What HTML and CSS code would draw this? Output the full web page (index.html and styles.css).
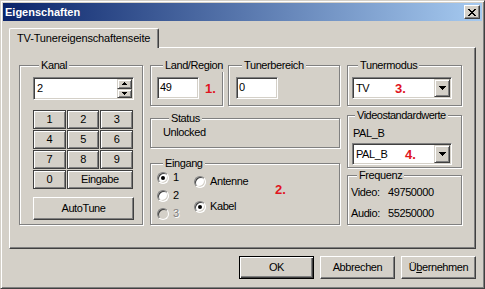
FILE: index.html
```html
<!DOCTYPE html>
<html lang="de">

<head>
   <meta charset="UTF-8">
   <title>Eigenschaften</title>
   <link rel="stylesheet" href="styles.css">
</head>

<body>
   <div class="window">
      <div class="titlebar">
         <span class="title">Eigenschaften</span>
         <span class="close-btn">
            <svg width="8" height="7" viewBox="0 0 8 7">
               <path d="M0 0h2v1h-2z M6 0h2v1h-2z M1 1h2v1h-2z M5 1h2v1h-2z M2 2h4v1h-4z M3 3h2v1h-2z M2 4h4v1h-4z M1 5h2v1h-2z M5 5h2v1h-2z M0 6h2v1h-2z M6 6h2v1h-2z" fill="#000" />
            </svg>
         </span>
      </div>

      <div class="dialog">
         <div class="tabs">
            <div class="tab">TV-Tunereigenschaftenseite</div>
         </div>

         <div class="panel">
            <!-- left column: channel -->
            <div class="col">
               <div class="group kanal">
                  <div class="group-title">Kanal</div>
                  <div class="edit spin-edit">
                     <span class="edit-text">2</span>
                     <span class="spinner">
                        <span class="spin-btn">
                           <svg width="5" height="3" viewBox="0 0 5 3"><path d="M2 0H3V1H4V2H5V3H0V2H1V1H2Z" /></svg>
                        </span>
                        <span class="spin-btn">
                           <svg width="5" height="3" viewBox="0 0 5 3"><path d="M0 0H5V1H4V2H3V3H2V2H1V1H0Z" /></svg>
                        </span>
                     </span>
                  </div>
                  <div class="numpad">
                     <span class="key">1</span>
                     <span class="key">2</span>
                     <span class="key">3</span>
                     <span class="key">4</span>
                     <span class="key">5</span>
                     <span class="key">6</span>
                     <span class="key">7</span>
                     <span class="key">8</span>
                     <span class="key">9</span>
                     <span class="key">0</span>
                     <span class="key wide">Eingabe</span>
                  </div>
                  <div class="btn autotune">AutoTune</div>
               </div>
            </div>

            <!-- middle column -->
            <div class="col">
               <div class="row">
                  <div class="group land">
                     <div class="group-title">Land/Region</div>
                     <div class="field-row">
                        <div class="edit small-edit">49</div>
                        <span class="marker">1.</span>
                     </div>
                  </div>
                  <div class="group tuner">
                     <div class="group-title">Tunerbereich</div>
                     <div class="field-row">
                        <div class="edit small-edit">0</div>
                     </div>
                  </div>
               </div>

               <div class="group status">
                  <div class="group-title">Status</div>
                  <div class="status-text">Unlocked</div>
               </div>

               <div class="group eingang">
                  <div class="group-title">Eingang</div>
                  <div class="radio-area">
                     <div class="radio-col">
                        <div class="radio"><span class="radio-dot checked"></span>1</div>
                        <div class="radio"><span class="radio-dot"></span>2</div>
                        <div class="radio disabled"><span class="radio-dot"></span>3</div>
                     </div>
                     <div class="radio-col source">
                        <div class="radio"><span class="radio-dot"></span>Antenne</div>
                        <div class="radio"><span class="radio-dot checked"></span>Kabel</div>
                     </div>
                     <span class="marker eingang-marker">2.</span>
                  </div>
               </div>
            </div>

            <!-- right column -->
            <div class="col">
               <div class="group tunermodus">
                  <div class="group-title">Tunermodus</div>
                  <div class="edit combo">
                     <span class="combo-value">TV</span>
                     <span class="marker">3.</span>
                     <span class="combo-btn">
                        <svg width="7" height="4" viewBox="0 0 7 4"><path d="M0 0H7V1H6V2H5V3H4V4H3V3H2V2H1V1H0Z" /></svg>
                     </span>
                  </div>
               </div>

               <div class="group video">
                  <div class="group-title">Videostandardwerte</div>
                  <div class="video-label">PAL_B</div>
                  <div class="edit combo">
                     <span class="combo-value">PAL_B</span>
                     <span class="marker">4.</span>
                     <span class="combo-btn">
                        <svg width="7" height="4" viewBox="0 0 7 4"><path d="M0 0H7V1H6V2H5V3H4V4H3V3H2V2H1V1H0Z" /></svg>
                     </span>
                  </div>
               </div>

               <div class="group frequenz">
                  <div class="group-title">Frequenz</div>
                  <div class="freq-row"><span class="freq-label">Video:</span>49750000</div>
                  <div class="freq-row"><span class="freq-label">Audio:</span>55250000</div>
               </div>
            </div>
         </div>

         <div class="buttons">
            <div class="btn dlg-btn default">OK</div>
            <div class="btn dlg-btn">Abbrechen</div>
            <div class="btn dlg-btn">Ü<u>b</u>ernehmen</div>
         </div>
      </div>
   </div>
</body>

</html>
```

FILE: styles.css
```css
/* General body styling */
body {
   margin: 0;
   font-family: "Liberation Sans", Arial, sans-serif;
   font-size: 11px;
   line-height: 13px;
   letter-spacing: -0.4px;
   color: #000;
   white-space: nowrap;
}

/* Window frame */
.window {
   width: 485px;
   height: 289px;
   box-sizing: border-box;
   background-color: #d4d0c8;
   border: 1px solid;
   border-color: #d4d0c8 #404040 #404040 #d4d0c8;
   box-shadow: inset 1px 1px #fff, inset -1px -1px #808080;
   padding: 2px;
}

.titlebar {
   height: 18px;
   display: flex;
   align-items: center;
   justify-content: space-between;
   padding: 0 2px;
   background: linear-gradient(to right, #0a246a, #a6caf0);
}

.title {
   color: #fff;
   font-weight: bold;
   letter-spacing: 0;
}

.close-btn {
   width: 16px;
   height: 14px;
   box-sizing: border-box;
   display: flex;
   align-items: center;
   justify-content: center;
   background-color: #d4d0c8;
   border: 1px solid;
   border-color: #fff #404040 #404040 #fff;
   box-shadow: inset -1px -1px #808080;
}

/* Dialog body */
.dialog {
   padding: 7px 6px 0;
}

.tabs {
   display: flex;
}

.tab {
   width: 150px;
   height: 20px;
   box-sizing: border-box;
   display: flex;
   align-items: center;
   padding: 0 7px;
   letter-spacing: -0.15px;
   background-color: #d4d0c8;
   border: 1px solid;
   border-bottom: 0;
   border-color: #fff #404040 #fff #fff;
   border-radius: 2px 2px 0 0;
   box-shadow: inset -1px 0 #808080;
   position: relative;
   z-index: 1;
   margin-bottom: -1px;
}

.panel {
   height: 202px;
   box-sizing: border-box;
   border: 1px solid;
   border-color: #fff #404040 #404040 #fff;
   box-shadow: inset -1px -1px #808080;
   padding: 17px 0 0 9px;
   display: grid;
   grid-template-columns: 124px 190px 115px;
   column-gap: 7px;
   align-items: start;
}

.col {
   display: flex;
   flex-direction: column;
}

.row {
   display: flex;
   gap: 5px;
}

/* Group boxes */
.group {
   box-sizing: border-box;
   border: 1px solid #808080;
   box-shadow: inset 1px 1px #fff, 1px 1px #fff;
}

.group-title {
   display: table;
   margin: -7px 0 0 6px;
   padding: 0 2px;
   background-color: #d4d0c8;
}

/* Edit fields and buttons */
.edit {
   box-sizing: border-box;
   background-color: #fff;
   border: 1px solid;
   border-color: #808080 #fff #fff #808080;
   box-shadow: inset 1px 1px #404040, inset -1px -1px #d4d0c8;
   padding: 1px;
}

.btn {
   box-sizing: border-box;
   display: flex;
   align-items: center;
   justify-content: center;
   background-color: #d4d0c8;
   border: 1px solid;
   border-color: #fff #404040 #404040 #fff;
   box-shadow: inset -1px -1px #808080;
}

/* Kanal */
.kanal {
   height: 160px;
   padding-left: 13px;
}

.spin-edit {
   width: 101px;
   height: 23px;
   margin-top: 5px;
   display: flex;
}

.edit-text {
   flex: 1;
   padding: 3px 0 0 2px;
}

.spinner {
   width: 15px;
   display: flex;
   flex-direction: column;
}

.spin-btn {
   flex: 1;
   box-sizing: border-box;
   display: flex;
   align-items: center;
   justify-content: center;
   background-color: #d4d0c8;
   border: 1px solid;
   border-color: #d4d0c8 #404040 #404040 #d4d0c8;
   box-shadow: inset 1px 1px #fff, inset -1px -1px #808080;
}

.numpad {
   width: 100px;
   margin-top: 10px;
   display: grid;
   grid-template-columns: repeat(3, 1fr);
   grid-auto-rows: 19px;
   gap: 1px;
}

.key {
   box-sizing: border-box;
   display: flex;
   align-items: center;
   justify-content: center;
   background-color: #d4d0c8;
   border: 1px solid #404040;
   box-shadow: inset 1px 1px #fff, inset -1px -1px #808080;
}

.key.wide {
   grid-column: span 2;
}

.autotune {
   width: 101px;
   height: 23px;
   margin-top: 8px;
}

/* Land / Tuner */
.land {
   width: 73px;
   height: 41px;
   padding-left: 6px;
}

.tuner {
   width: 112px;
   height: 41px;
   padding-left: 7px;
}

.field-row {
   display: flex;
   align-items: center;
   margin-top: 5px;
}

.small-edit {
   width: 42px;
   height: 22px;
   padding: 3px 2px 0;
}

.marker {
   color: #e0141e;
   font-weight: bold;
   font-size: 13px;
   letter-spacing: 0;
}

.field-row .marker {
   margin-left: 6px;
}

/* Status */
.status {
   height: 30px;
   margin-top: 12px;
   padding-left: 12px;
}

.status-text {
   margin-top: 1px;
}

/* Eingang */
.eingang {
   height: 62px;
   margin-top: 15px;
   padding-left: 6px;
}

.radio-area {
   display: flex;
   margin-top: 1px;
}

.radio-col {
   width: 37px;
   display: flex;
   flex-direction: column;
   gap: 5px;
}

.radio-col.source {
   width: 81px;
   margin-top: 4px;
   gap: 12px;
}

.radio {
   height: 13px;
   display: flex;
   align-items: center;
   gap: 4px;
}

.radio-dot {
   width: 12px;
   height: 12px;
   box-sizing: border-box;
   display: flex;
   align-items: center;
   justify-content: center;
   border-radius: 50%;
   background-color: #fff;
   border: 1px solid;
   border-color: #808080 #fff #fff #808080;
   box-shadow: inset 1px 1px #404040, inset -1px -1px #d4d0c8;
}

.radio-dot.checked::after {
   content: "";
   width: 4px;
   height: 4px;
   border-radius: 50%;
   background-color: #000;
}

.radio.disabled {
   color: #808080;
   text-shadow: 1px 1px #fff;
}

.radio.disabled .radio-dot {
   background-color: #d4d0c8;
}

.eingang-marker {
   margin-top: 12px;
}

/* Right column */
.tunermodus {
   height: 41px;
   padding-left: 4px;
}

.combo {
   width: 100px;
   height: 22px;
   display: flex;
   align-items: center;
}

.tunermodus .combo {
   margin-top: 5px;
}

.combo-value {
   width: 39px;
   padding-left: 2px;
}

.video .combo-value {
   width: 49px;
}

.combo .marker {
   flex: 1;
}

.combo-btn {
   width: 16px;
   height: 18px;
   box-sizing: border-box;
   display: flex;
   align-items: center;
   justify-content: center;
   background-color: #d4d0c8;
   border: 1px solid;
   border-color: #d4d0c8 #404040 #404040 #d4d0c8;
   box-shadow: inset 1px 1px #fff, inset -1px -1px #808080;
}

.video {
   height: 53px;
   margin-top: 9px;
   padding-left: 4px;
}

.video .group-title {
   margin-left: 3px;
   letter-spacing: -0.5px;
}

.video-label {
   margin-top: 5px;
   padding-left: 1px;
}

.video .combo {
   margin-top: 3px;
}

.frequenz {
   height: 50px;
   margin-top: 7px;
   padding-left: 3px;
}

.freq-row {
   display: flex;
   margin-top: 4px;
}

.freq-row + .freq-row {
   margin-top: 8px;
}

.freq-label {
   width: 37px;
}

/* Bottom buttons */
.buttons {
   display: flex;
   justify-content: flex-end;
   gap: 6px;
   margin-top: 7px;
}

.dlg-btn {
   width: 75px;
   height: 23px;
}

.dlg-btn.default {
   border-color: #000;
   box-shadow: inset 1px 1px #fff, inset -1px -1px #404040, inset -2px -2px #808080;
}
```
